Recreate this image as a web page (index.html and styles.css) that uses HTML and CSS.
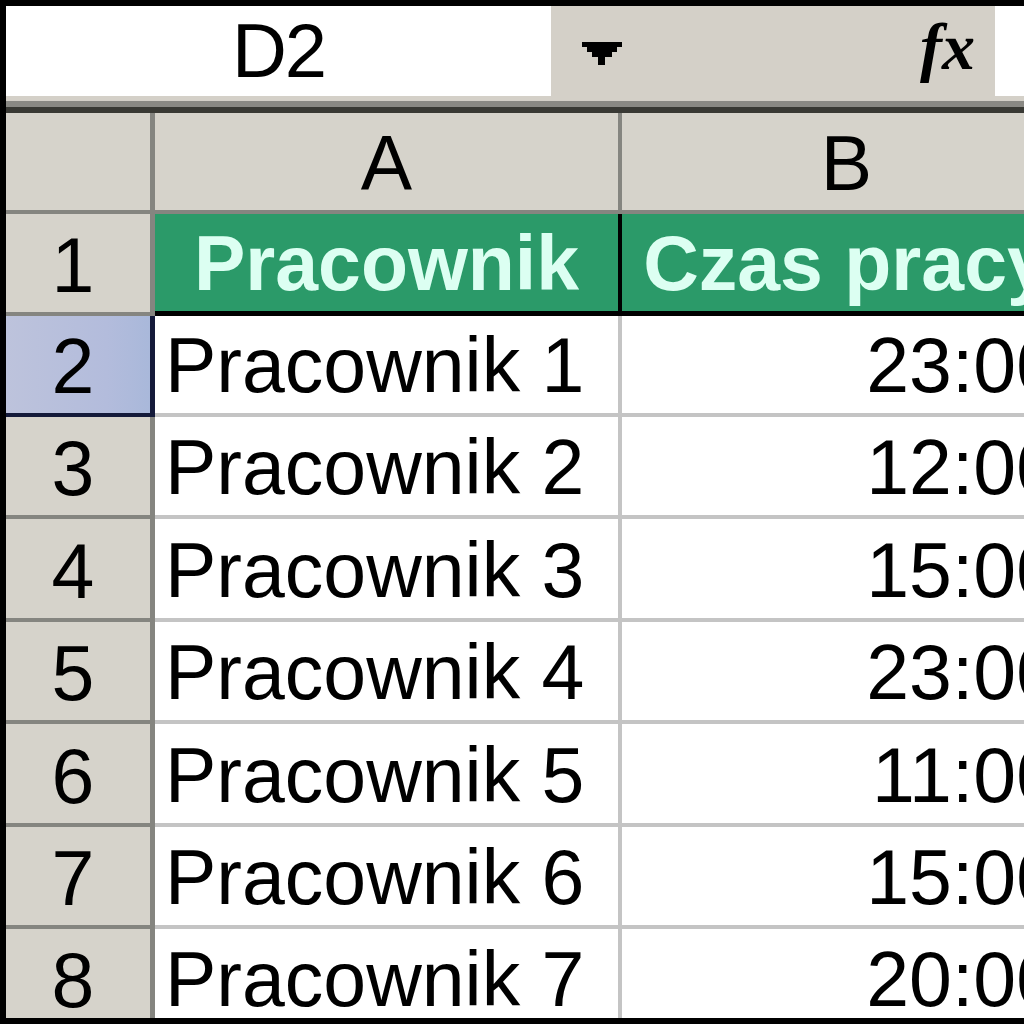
FILE: index.html
```html
<html>
<head>
  <meta charset="UTF-8">
  <title>Arkusz - czas pracy</title>
  <link rel="stylesheet" href="styles.css">
</head>
<body>
  <div class="window">
    <div class="formula-bar">
      <div class="name-box">D2</div>
      <div class="name-tools">
        <svg class="name-arrow" width="40" height="23" viewBox="0 0 40 23">
          <path d="M0 0H40V5H35V10H30V15H23V23H16V15H10V10H5V5H0Z" fill="#000"/>
        </svg>
        <span class="fx">fx</span>
      </div>
      <div class="formula-input"></div>
    </div>
    <div class="bar-edge"></div>

    <div class="sheet">
      <div class="corner"></div>
      <div class="col-head">A</div>
      <div class="col-head">B</div>

      <div class="row-head">1</div>
      <div class="cell title">Pracownik</div>
      <div class="cell title last">Czas pracy</div>

      <div class="row-head active">2</div>
      <div class="cell name">Pracownik 1</div>
      <div class="cell time">23:00</div>

      <div class="row-head">3</div>
      <div class="cell name">Pracownik 2</div>
      <div class="cell time">12:00</div>

      <div class="row-head">4</div>
      <div class="cell name">Pracownik 3</div>
      <div class="cell time">15:00</div>

      <div class="row-head">5</div>
      <div class="cell name">Pracownik 4</div>
      <div class="cell time">23:00</div>

      <div class="row-head">6</div>
      <div class="cell name">Pracownik 5</div>
      <div class="cell time">11:00</div>

      <div class="row-head">7</div>
      <div class="cell name">Pracownik 6</div>
      <div class="cell time">15:00</div>

      <div class="row-head">8</div>
      <div class="cell name">Pracownik 7</div>
      <div class="cell time">20:00</div>
    </div>
  </div>
</body>
</html>
```

FILE: styles.css
```css
body {
  margin: 0;
  padding: 0;
  background: #000;
  width: 1024px;
  height: 1024px;
  overflow: hidden;
  font-family: "Liberation Sans", Arial, sans-serif;
  color: #000;
}
.window {
  box-sizing: border-box;
  width: 1024px;
  height: 1018px;
  padding: 6px 0 0 6px;
  overflow: hidden;
}

/* name box + formula bar */
.formula-bar {
  display: flex;
  height: 90px;
}
.name-box {
  width: 545px;
  background: #fff;
  text-align: center;
  font-size: 76px;
  line-height: 90px;
  letter-spacing: -2px;
}
.name-tools {
  width: 444px;
  background: #d4d0c8;
  display: flex;
  align-items: flex-start;
}
.name-arrow {
  margin: 36px 0 0 31px;
}
.fx {
  margin: 6px 20px 0 auto;
  font-family: "Liberation Serif", "Times New Roman", serif;
  font-style: italic;
  font-weight: bold;
  font-size: 66px;
  line-height: 70px;
}
.formula-input {
  flex: 1;
  background: #fff;
}
.bar-edge {
  height: 17px;
  background: linear-gradient(#d4d0c8 0, #d4d0c8 5px, #8a8984 5px, #8a8984 11px, #393934 11px);
}

/* grid */
.sheet {
  display: grid;
  grid-template-columns: 149px 467px 453px;
  grid-template-rows: 101px 102px 101px repeat(6, 102.4px);
  background: #fff;
}
.sheet > div {
  box-sizing: border-box;
  display: flex;
  align-items: flex-end;
  overflow: hidden;
  white-space: nowrap;
  line-height: 1;
  font-size: 77px;
}
.corner, .col-head, .row-head {
  background: #d6d3cb;
  border-right: 5px solid #858580;
  border-bottom: 4px solid #858580;
}
.col-head {
  justify-content: center;
  padding-bottom: 8px;
  border-right-width: 4px;
}
.row-head {
  justify-content: center;
  padding: 0 10px 8px 0;
}
.row-head.active {
  background: linear-gradient(90deg, #bdc3dc, #b3bcdc 70%, #a9b8da);
  border-right-color: #141a3a;
  border-bottom-color: #141a3a;
}
.cell {
  border-right: 4px solid #c4c4c4;
  border-bottom: 4px solid #c4c4c4;
  padding-bottom: 9px;
}
.title {
  background: #2b9a69;
  color: #dcfff2;
  font-weight: bold;
  justify-content: center;
  border-right-color: #000;
  border-bottom: 5px solid #000;
  font-size: 78px;
}
.name {
  padding-left: 10px;
}
.time {
  justify-content: flex-end;
  padding-right: 12px;
}
```
